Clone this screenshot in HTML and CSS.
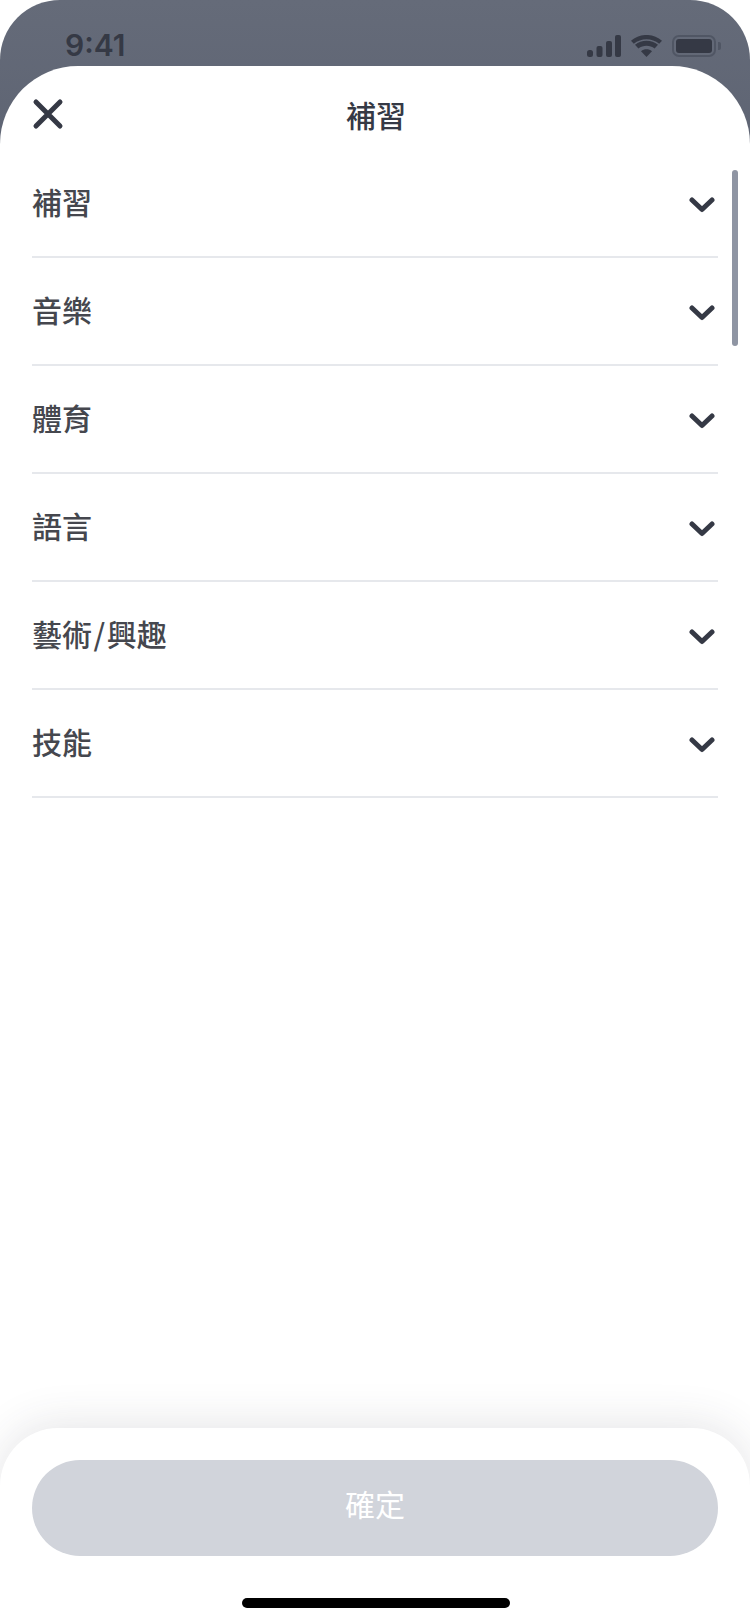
FILE: index.html
```html
<!DOCTYPE html>
<html lang="zh-Hant">
<head>
  <meta charset="UTF-8">
  <meta name="viewport" content="width=device-width, initial-scale=1.0">
  <title>補習</title>
  <link rel="stylesheet" href="styles.css">
</head>
<body>
  <div class="phone">
    <div class="status-bar">
      <span class="time">9:41</span>
      <div class="status-icons">
        <svg class="signal" width="34" height="22" viewBox="0 0 34 22">
          <rect x="0" y="15" width="6" height="7" rx="2.5"/>
          <rect x="9.500" y="11" width="6" height="11" rx="2"/>
          <rect x="19" y="6" width="6" height="16" rx="2"/>
          <rect x="28" y="0" width="6" height="22" rx="2"/>
        </svg>
        <svg class="wifi" width="31" height="22" viewBox="0 0 31 22">
          <path d="M15.500 22 L10 16.200 C13.300 13.600 17.700 13.600 21 16.200 Z"/>
          <path d="M7.400 13.400 L4 9.800 C10.600 4.300 20.400 4.300 27 9.800 L23.600 13.400 C18.900 9.800 12.100 9.800 7.400 13.400 Z"/>
          <path d="M2.800 8.800 L0 5.800 C8.600 -2 22.400 -2 31 5.800 L28.200 8.800 C20.900 2.800 10.100 2.800 2.800 8.800 Z"/>
        </svg>
        <div class="battery">
          <div class="battery-level"></div>
        </div>
      </div>
    </div>

    <div class="sheet">
      <div class="sheet-header">
        <svg class="close" width="32" height="32" viewBox="0 0 32 32">
          <path d="M4 4 L28 28 M28 4 L4 28"/>
        </svg>
        <h1>補習</h1>
      </div>

      <div class="list">
        <div class="row"><span>補習</span><svg class="chevron" width="26" height="18" viewBox="0 0 26 18"><path d="M3 4 L13 13.500 L23 4"/></svg></div>
        <div class="row"><span>音樂</span><svg class="chevron" width="26" height="18" viewBox="0 0 26 18"><path d="M3 4 L13 13.500 L23 4"/></svg></div>
        <div class="row"><span>體育</span><svg class="chevron" width="26" height="18" viewBox="0 0 26 18"><path d="M3 4 L13 13.500 L23 4"/></svg></div>
        <div class="row"><span>語言</span><svg class="chevron" width="26" height="18" viewBox="0 0 26 18"><path d="M3 4 L13 13.500 L23 4"/></svg></div>
        <div class="row"><span>藝術<i class="slash">/</i>興趣</span><svg class="chevron" width="26" height="18" viewBox="0 0 26 18"><path d="M3 4 L13 13.500 L23 4"/></svg></div>
        <div class="row"><span>技能</span><svg class="chevron" width="26" height="18" viewBox="0 0 26 18"><path d="M3 4 L13 13.500 L23 4"/></svg></div>
      </div>
      <div class="scrollbar"></div>

      <div class="footer">
        <button class="confirm" type="button">確定</button>
        <div class="home-bar"></div>
      </div>
    </div>
  </div>
</body>
</html>
```

FILE: styles.css
```css
html, body {
  margin: 0;
  padding: 0;
  background: #fff;
}
body {
  font-family: "Noto Sans CJK TC", "Noto Sans", sans-serif;
}
.phone {
  width: 750px;
  height: 1624px;
  display: flex;
  flex-direction: column;
  background: linear-gradient(#656b79, #5e6473 150px);
  border-radius: 60px 60px 0 0;
  overflow: hidden;
}
.status-bar {
  height: 66px;
  flex: none;
  display: flex;
  justify-content: space-between;
  padding: 0 34px 0 65px;
  box-sizing: border-box;
  color: #353945;
}
.time {
  font-family: Inter, sans-serif;
  font-size: 30px;
  font-weight: 600;
  line-height: 36px;
  margin-top: 27px;
}
.status-icons {
  display: flex;
  align-items: flex-start;
  gap: 10px;
  padding-top: 35px;
}
.signal, .wifi {
  fill: #353945;
}
.battery {
  position: relative;
  width: 44px;
  height: 22px;
  padding: 2px;
  box-sizing: border-box;
  border: 2px solid #505664;
  border-radius: 7px;
}
.battery::after {
  content: "";
  position: absolute;
  right: -7px;
  top: 5px;
  width: 3px;
  height: 8px;
  background: #505664;
  border-radius: 0 2px 2px 0;
}
.battery-level {
  height: 100%;
  background: #353945;
  border-radius: 3px;
}
.sheet {
  position: relative;
  flex: 1;
  display: flex;
  flex-direction: column;
  background: #fff;
  border-radius: 78px 78px 0 0;
}
.sheet-header {
  position: relative;
  height: 84px;
  flex: none;
  display: flex;
  align-items: center;
  justify-content: center;
}
.sheet-header h1 {
  margin: 0 0 0 2px;
  font-size: 30px;
  font-weight: 500;
  line-height: 40px;
  color: #353945;
  position: relative;
  top: 6px;
}
.close {
  position: absolute;
  left: 32px;
  top: 32px;
}
.close path {
  fill: none;
  stroke: #353945;
  stroke-width: 5;
  stroke-linecap: round;
}
.list {
  flex: 1;
  padding: 0 32px;
}
.row {
  height: 108px;
  box-sizing: border-box;
  display: flex;
  align-items: center;
  justify-content: space-between;
  border-bottom: 2px solid #e6e8ec;
  font-size: 30px;
  font-weight: 500;
  color: #45474e;
}
.row span {
  margin-bottom: 4px;
}
.slash {
  font-style: normal;
  margin: 0 1.5px;
}
.chevron {
  margin: 4px 3px 0 0;
}
.chevron path {
  fill: none;
  stroke: #353945;
  stroke-width: 5;
  stroke-linecap: round;
  stroke-linejoin: round;
}
.scrollbar {
  position: absolute;
  left: 732px;
  top: 104px;
  width: 6px;
  height: 176px;
  background: #8f95a3;
  border-radius: 3px;
}
.footer {
  height: 196px;
  flex: none;
  box-sizing: border-box;
  padding: 32px 32px 0;
  background: #fff;
  border-radius: 58px 58px 0 0;
  box-shadow: 0 -4px 44px rgba(53, 57, 69, 0.13);
}
.confirm {
  display: block;
  width: 100%;
  height: 96px;
  padding: 0 0 10px;
  border: none;
  border-radius: 48px;
  background: #d1d4db;
  color: #fff;
  font-family: inherit;
  font-size: 30px;
  font-weight: 400;
}
.home-bar {
  width: 268px;
  height: 10px;
  margin: 42px 0 0 210px;
  background: #000;
  border-radius: 5px;
}
```
